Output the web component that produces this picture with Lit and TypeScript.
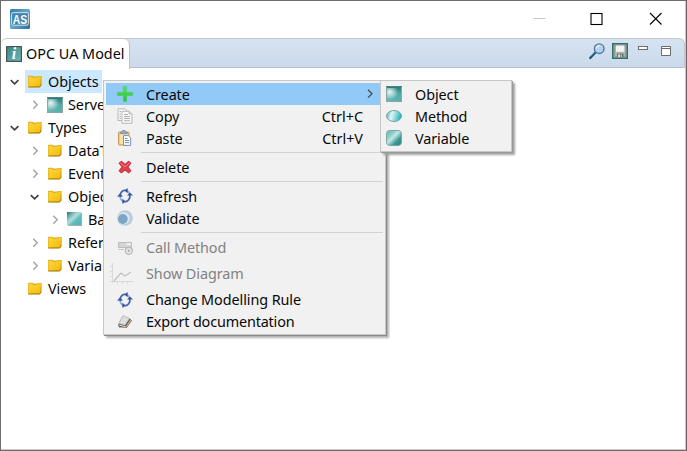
import { LitElement, html, css, svg, nothing } from "lit";
import { customElement, property } from "lit/decorators.js";

const defs = svg`
  <linearGradient id="fold" x1="0" y1="0" x2="1" y2="1"><stop offset="0" stop-color="#f9d446"/><stop offset=".5" stop-color="#f8ca22"/><stop offset="1" stop-color="#f0bb10"/></linearGradient>
  <linearGradient id="obj" x1="0" y1="1" x2="1" y2="0"><stop offset="0" stop-color="#66b9b5"/><stop offset="1" stop-color="#4fa5a1"/></linearGradient>
  <radialGradient id="shine" cx=".2" cy=".3" r=".6"><stop offset="0" stop-color="#fff" stop-opacity=".9"/><stop offset="1" stop-color="#fff" stop-opacity="0"/></radialGradient>
  <linearGradient id="objv" x1="0" y1="0" x2="0" y2=".5"><stop offset="0" stop-color="#237c79"/><stop offset="1" stop-color="#237c79" stop-opacity="0"/></linearGradient>
  <linearGradient id="typ" x1="0" y1="0" x2="1" y2="1"><stop offset="0" stop-color="#1f7476"/><stop offset=".32" stop-color="#8cc6c5"/><stop offset=".45" stop-color="#b4dddc"/><stop offset=".65" stop-color="#5fbdba"/><stop offset="1" stop-color="#4db3b0"/></linearGradient>
  <linearGradient id="met" x1="0" y1="0" x2="1" y2=".2"><stop offset="0" stop-color="#4aa5a6"/><stop offset=".4" stop-color="#e2f4f4"/><stop offset=".7" stop-color="#8ed6d8"/><stop offset="1" stop-color="#16bcc4"/></linearGradient>
  <linearGradient id="vari" x1="0" y1="0" x2="1" y2="1"><stop offset="0" stop-color="#5fbdb9"/><stop offset=".3" stop-color="#8fd0cd"/><stop offset=".45" stop-color="#c5e7e5"/><stop offset=".7" stop-color="#3f9b98"/><stop offset="1" stop-color="#237c79"/></linearGradient>
  <linearGradient id="grn" x1="0" y1="0" x2="0" y2="1"><stop offset="0" stop-color="#5de06a"/><stop offset="1" stop-color="#22c32b"/></linearGradient>
  <linearGradient id="inf" x1="0" y1="0" x2="1" y2="1"><stop offset="0" stop-color="#3b8786"/><stop offset="1" stop-color="#6fb7b3"/></linearGradient>
  <linearGradient id="app" x1="0" y1="0" x2="1" y2="1"><stop offset="0" stop-color="#2c7ba6"/><stop offset=".5" stop-color="#6aa8c8"/><stop offset="1" stop-color="#1f6f9c"/></linearGradient>`;

const art: Record<string, unknown> = {
  folder: svg`<path d="M1 2.2 1.8 1.7H5.4L6.8 2.7 14.6 1.9V10.9L13 13.2H1Z" fill="#d9a00c"/><path d="M1.4 2.6H5.2L6.4 4 14.2 2.6 12.8 11.9 1.4 12.7Z" fill="url(#fold)"/><path d="M1.4 13H12.6L14.3 10.8" fill="none" stroke="#a57c12" stroke-width=".9"/>`,
  object: svg`<rect x=".5" y=".5" width="15" height="15" fill="url(#obj)"/><rect x="1" y="1" width="14" height="14" fill="url(#objv)"/><rect x="1" y="2" width="14" height="13" fill="url(#shine)"/><rect x=".5" y=".5" width="15" height="15" fill="none" stroke="#84a9a8"/><path d="M0 .5H16" stroke="#4a8381"/>`,
  type: svg`<rect x="1" y="1" width="14" height="13" fill="#a3b0b0"/><rect x="0" y="0" width="14" height="13" fill="url(#typ)"/>`,
  method: svg`<ellipse cx="8" cy="8" rx="7.5" ry="5.5" fill="url(#met)" stroke="#78a4a5"/>`,
  variable: svg`<rect x=".5" y=".5" width="15" height="15" rx="3.4" fill="url(#vari)" stroke="#79a5a4"/>`,
  plus: svg`<path d="M6.4 .4H9.6V6.3H15.6V9.5H9.6V15.4H6.4V9.5H.4V6.3H6.4Z" fill="url(#grn)" stroke="#44cf50" stroke-width=".5"/>`,
  copy: svg`<g stroke="#b8b8b8" stroke-width="1" fill="#fafafa"><path d="M1 .8H8L10 3V12.5H1Z"/><path d="M5 3.3H12L15 6V15.3H5Z"/><path d="M12 3.3V6H15" fill="#ddd"/></g><path d="M2.5 3.5H4M2.5 6H4M2.5 8.5H4M2.5 10.5H4M7 6.5H11M7 8.5H13M7 10.5H13M7 12.8H13" stroke="#b0b0b0"/>`,
  paste: svg`<rect x="1.5" y="2" width="10.5" height="13" rx="1" fill="#f2cb86" stroke="#c59a55"/><rect x="3.2" y="4" width="7.5" height="10" fill="#fbe4b4"/><path d="M3.6 3.7V2.2H5L5.7 .6H8L8.8 2.2H10.2V3.7Z" fill="#9badcb" stroke="#667ca4" stroke-width=".7"/><path d="M6.5 5.6H11.5L13.7 8V15.4H6.5Z" fill="#fff" stroke="#7d8eab"/><path d="M8 8.5H10.5M8 10.5H12.2M8 12.6H12.2" stroke="#6e87b3"/>`,
  del: svg`<path d="M2.2 4.2 4.4 2.3 8 5.4 11.6 2.3 13.8 4.2 10.9 8 13.8 11.8 11.6 13.8 8 10.9 4.4 13.8 2.2 11.8 5.1 8Z" fill="#e2404c" stroke="#c83540" stroke-width="1.1" stroke-linejoin="round"/><path d="M3.4 4.1 8 7.8 12.6 4" fill="none" stroke="#f08087" stroke-width="1"/>`,
  refresh: svg`<g fill="none" stroke-width="1.7"><path d="M3.2 9.5C2.6 5.2 4.8 2.5 8.4 2.2" stroke="#3f66ad"/><path d="M3.2 9.2C3.6 11.8 4.6 12.9 6 13.6" stroke="#8eabdc"/><path d="M12.8 6.5C13.4 10.8 11.2 13.5 7.6 13.8" stroke="#3f66ad"/><path d="M12.8 6.8C12.4 4.2 11.4 3.1 10 2.4" stroke="#8eabdc"/></g><path d="M10.6 0V5.2L7.4 2.4Z M5.4 16V10.8L8.6 13.6Z" fill="#2f5399"/><path d="M10 7.6 13 4.4 16 7.6Z M0 8.4H6L3 5.6Z" fill="#35599f"/>`,
  validate: svg`<circle cx="8" cy="8" r="7.8" fill="#b9ccdc"/><circle cx="6.6" cy="8.4" r="6.1" fill="#dce7ef"/><circle cx="5.8" cy="9" r="4.9" fill="#7ea4c6"/>`,
  call: svg`<path d="M1.5 2.5H14.5V7.5H1.5Z" fill="#d4d4d4" stroke="#bcbcbc"/><path d="M9.5 4.2H14" stroke="#f2f2f2" stroke-width="2"/><path d="M1 9.5H7" stroke="#c8c8c8"/><circle cx="11.8" cy="10.8" r="3.5" fill="#e8e8e8" stroke="#b8b8b8" stroke-width="1.2"/><path d="M10.8 9 13.2 10.8 10.8 12.6Z" fill="#aaa"/>`,
  exportDoc: svg`<path d="M1.2 11 5.6 2.4 12.2 4.3 15 6.4 9.7 13.8 2 13.2Z" fill="#55504b"/><path d="M1.6 9.6 6 1.6 12.6 4.4 8 11.2Z" fill="#dedede" stroke="#a5a5a5" stroke-width=".6"/><path d="M9 12 13.2 5.4 14.6 6.6 9.8 13.2Z" fill="#c3a683"/><path d="M2.2 11.2 8.8 12.7" stroke="#f6f6f6" stroke-width=".9"/>`,
  info: svg`<rect x=".6" y=".6" width="14.8" height="14.8" fill="url(#inf)" stroke="#4a5558" stroke-width="1.2"/>`,
  find: svg`<path d="M1.2 15 6.4 9.5" stroke="#1c527c" stroke-width="2.3" stroke-linecap="round"/><path d="M2.2 12.9 5.7 9.4" stroke="#4f91bd" stroke-width=".8"/><circle cx="10.2" cy="5.7" r="4.8" fill="#b6d2ef" stroke="#56799c" stroke-width="1.4"/><path d="M7.2 5.2Q8 2.7 10.7 2.6" fill="none" stroke="#eff7ff" stroke-width="1.3"/>`,
  save: svg`<rect x=".7" y=".7" width="14.6" height="14.6" fill="#8fb5b1" stroke="#306f69" stroke-width="1.4"/><path d="M2.5 2.3H13.7V13.8H4L2.5 12.3Z" fill="#b2b2b2" stroke="#858585" stroke-width=".7"/><rect x="4" y="2.5" width="8.3" height="6.3" fill="#f2f2f2"/><path d="M5 10.6H11.5V14H5Z" fill="#707070"/><path d="M6.2 11.4H8V14H6.2Z" fill="#eee"/><path d="M9.3 11.4V14" stroke="#c8c8c8"/>`,
};

@customElement("ua-icon")
export class UaIcon extends LitElement {
  @property() name = "";
  static styles = css`
    :host { display: block; flex: none; width: 16px; height: 16px; }
    svg { display: block; width: 100%; height: 100%; overflow: visible; }
  `;
  render() {
    return html`<svg viewBox="0 0 16 16"><defs>${defs}</defs>${art[this.name]}</svg>`;
  }
}

interface Node { label: string; depth: number; icon: string; open?: boolean; selected?: boolean; leaf?: boolean; }
const nodes: Node[] = [
  { label: "Objects", depth: 0, icon: "folder", open: true, selected: true },
  { label: "Server", depth: 1, icon: "object" },
  { label: "Types", depth: 0, icon: "folder", open: true },
  { label: "DataT", depth: 1, icon: "folder" },
  { label: "EventT", depth: 1, icon: "folder" },
  { label: "Object", depth: 1, icon: "folder", open: true },
  { label: "Base", depth: 2, icon: "type" },
  { label: "Refere", depth: 1, icon: "folder" },
  { label: "Variabl", depth: 1, icon: "folder" },
  { label: "Views", depth: 0, icon: "folder", leaf: true },
];

interface Item { label?: string; icon?: string; key?: string; cls?: string; sub?: boolean; }
const menu: Item[] = [
  { label: "Create", icon: "plus", cls: "hot low", sub: true },
  { label: "Copy", icon: "copy", key: "Ctrl+C", cls: "low" },
  { label: "Paste", icon: "paste", key: "Ctrl+V", cls: "low" },
  {},
  { label: "Delete", icon: "del", cls: "low" },
  {},
  { label: "Refresh", icon: "refresh", cls: "low" },
  { label: "Validate", icon: "validate", cls: "low" },
  {},
  { label: "Call Method", icon: "call", cls: "off call" },
  { label: "Show Diagram", icon: "diagram", cls: "off tall" },
  { label: "Change Modelling Rule", icon: "refresh" },
  { label: "Export documentation", icon: "exportDoc", cls: "tight" },
];
const submenu: Item[] = [
  { label: "Object", icon: "object", cls: "low" },
  { label: "Method", icon: "method", cls: "low" },
  { label: "Variable", icon: "variable", cls: "low" },
];

@customElement("app-root")
export class AppRoot extends LitElement {
  static styles = css`
    * { box-sizing: border-box; }
    :host { display: block; position: relative; width: 687px; height: 451px; overflow: hidden;
      font: 14.4px/22px "Noto Sans", "Open Sans", sans-serif; color: #080808; white-space: nowrap; }
    .window { height: 451px; display: flex; flex-direction: column; background: #fff;
      border: 1px solid #6d6d6d; border-right-color: #66676a; box-shadow: inset -1px -1px #c8c8c8; }
    .title { height: 37px; flex: none; display: flex; align-items: center; padding-left: 9px; }
    .logo { display: block; width: 20px; height: 20px; margin-top: -1px; }
    .caption { margin: -1px 0 0 auto; display: flex; padding-right: 6px; }
    .caption svg { display: block; width: 58.5px; height: 36px; }
    .strip { height: 30px; flex: none; display: flex; margin-right: 1px; border: 1px solid #c3c7cd; border-left: 0;
      border-bottom-color: #b5bfd2; border-radius: 6px 6px 0 0; background: linear-gradient(#d5e2f1, #cbdaeb); }
    .tab { height: 30px; width: 129px; display: flex; align-items: center; gap: 4px; padding-left: 5px; background: #fff;
      border: 1px solid #b9bec8; border-width: 0 1px 0 0; border-radius: 6px 6px 0 0; }
    .info { position: relative; }
    .info i { position: absolute; inset: 0; text-align: center; font: italic bold 16px/15px "Liberation Serif", serif; color: #fff; }
    .tools { margin-left: auto; display: flex; padding: 4px 13px 0 0; }
    .tools ua-icon + ua-icon { margin-left: 7px; }
    .tools svg { width: 11px; height: 13px; margin-left: 9px; display: block; }
    .tools svg + svg { margin-left: 12px; }
    .tree { padding: 2px 0 0 4px; }
    .row { height: 23px; display: flex; }
    .indent { flex: none; }
    .twist { width: 20px; height: 23px; flex: none; }
    .node { display: flex; align-items: center; height: 23px; gap: 5px; padding: 0 3px 0 2px; letter-spacing: -0.05px; }
    .node.selected { background: #cce8ff; }
    .menu { position: absolute; background: #f1f1f1; border: 1px solid #c6c6c6; padding: 2px; letter-spacing: -0.08px; }
    .main { left: 103px; top: 80px; width: 283px; height: 255px; box-shadow: 1px 1px 0 #8a8a8a, 3px 3px 2px #b0b0b0; }
    .sub { left: 380px; top: 80px; width: 132px; height: 72px; box-shadow: 1px 1px 0 #999, 3px 3px 2px #a2a2a2; }
    .item { height: 22px; display: flex; align-items: center; }
    .item .pic { width: 40px; padding-left: 11px; flex: none; }
    .sub .pic { width: 32px; padding-left: 3px; }
    .low .label, .low .key { padding-top: 2px; }
    .tight { letter-spacing: -0.16px; }
    .key { margin-left: auto; padding-right: 20px; letter-spacing: 0; }
    .hot { background: #91c9f7; }
    .off { color: #828282; }
    .call { height: 23px; }
    .tall { height: 30px; }
    .chev { margin-left: auto; margin-right: 9px; width: 8px; height: 10px; }
    .sep { height: 7px; padding: 3px 0 0 35px; }
    .sep::before { content: ""; display: block; height: 1px; background: #d2d2d2; }
    .wide { display: block; width: 24px; height: 24px; margin-left: -7px; }
  `;

  twist(n: Node) {
    if (n.leaf) return html`<span class="twist"></span>`;
    return html`<svg class="twist" viewBox="0 0 20 23">${n.open
      ? svg`<path d="M5.8 10.2 9.6 13.8 13.4 10.2" fill="none" stroke="#404040" stroke-width="1.7"/>`
      : svg`<path d="M8.3 7.8 12.2 11.8 8.3 15.8" fill="none" stroke="#a2a2a2" stroke-width="1.4"/>`}</svg>`;
  }

  item(it: Item) {
    if (!it.label) return html`<div class="sep"></div>`;
    return html`<div class="item ${it.cls ?? ""}">
      <span class="pic">${it.icon === "diagram"
        ? html`<svg class="wide" viewBox="0 0 24 24"><path d="M2.5 1V21M0 19.5H23M0 4.5H3M0 9.5H3M0 14.5H3M7.5 19V22M12.5 19V22M17.5 19V22" fill="none" stroke="#d9d9d9"/><path d="M4 19 11 11 15 14 21 10" fill="none" stroke="#c0c0c0" stroke-width="1.2"/></svg>`
        : html`<ua-icon name=${it.icon}></ua-icon>`}</span>
      <span class="label">${it.label}</span>
      ${it.key ? html`<span class="key">${it.key}</span>` : nothing}
      ${it.sub ? html`<svg class="chev" viewBox="0 0 8 10"><path d="M2 .8 6 4.7 2 8.6" fill="none" stroke="#444" stroke-width="1.2"/></svg>` : nothing}
    </div>`;
  }

  render() {
    return html`
      <div class="window">
        <div class="title">
          <svg class="logo" viewBox="0 0 20 20"><defs>${defs}</defs><rect width="20" height="20" rx="1.5" fill="url(#app)"/><rect x="1.6" y="3.6" width="16.8" height="12.6" rx="1.5" fill="#3f86b0" stroke="#cfe2ec"/><text x="10" y="14.6" text-anchor="middle" font-family="Liberation Sans" font-weight="bold" font-size="12" textLength="14.5" lengthAdjust="spacingAndGlyphs" fill="#fff">AS</text></svg>
          <div class="caption">
            <svg viewBox="0 0 58.5 36"><path d="M28.5 17.5H40.5" stroke="#c6c6c6"/></svg>
            <svg viewBox="0 0 58.5 36"><rect x="28" y="12.5" width="11" height="11" fill="none" stroke="#000" stroke-width="1.1"/></svg>
            <svg viewBox="0 0 58.5 36"><path d="M28 12 39.5 23.5M39.5 12 28 23.5" stroke="#000" stroke-width="1.1"/></svg>
          </div>
        </div>
        <div class="strip">
          <div class="tab"><span class="info"><ua-icon name="info"></ua-icon><i>i</i></span><span>OPC UA Model</span></div>
          <div class="tools">
            <ua-icon name="find"></ua-icon><ua-icon name="save"></ua-icon>
            <svg viewBox="0 0 11 13"><rect x="1.5" y="3.5" width="9" height="3" fill="#fff" stroke="#6b6b6b"/></svg>
            <svg viewBox="0 0 11 13"><path d="M1.5 3.5H10.5V12.5H1.5ZM1.5 5.5H10.5" fill="#fff" stroke="#6b6b6b"/></svg>
          </div>
        </div>
        <div class="tree">
          ${nodes.map((n) => html`<div class="row"><span class="indent" style="width:${n.depth * 20}px"></span>${this.twist(n)}
            <div class="node ${n.selected ? "selected" : ""}"><ua-icon name=${n.icon}></ua-icon><span>${n.label}</span></div></div>`)}
        </div>
      </div>
      <div class="menu main">${menu.map((m) => this.item(m))}</div>
      <div class="menu sub">${submenu.map((m) => this.item(m))}</div>
    `;
  }
}
